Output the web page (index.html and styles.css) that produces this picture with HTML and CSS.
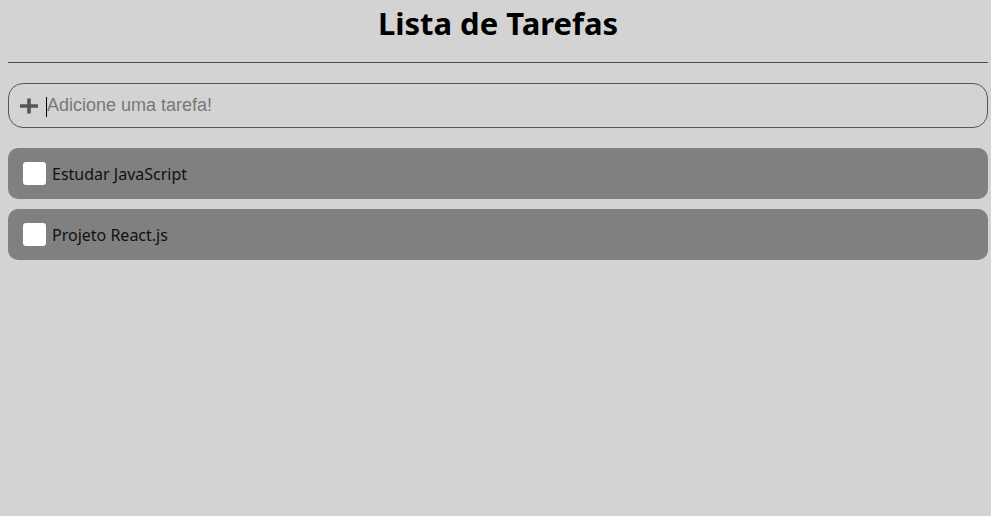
FILE: index.html
```html
<!DOCTYPE html>
<html lang="pt-BR">
<head>
<meta charset="utf-8">
<title>Lista de Tarefas</title>
<link rel="stylesheet" href="styles.css">
</head>
<body>
<header class="header">
  <h1 class="title">Lista de Tarefas</h1>
</header>
<hr class="divider">
<form class="add-form">
  <svg class="plus-icon" width="18" height="18" viewBox="0 0 18 18" aria-hidden="true">
    <path d="M9 1.5v15M0 9h18" stroke="#555" stroke-width="3.6" stroke-linecap="butt" fill="none"/>
  </svg>
  <span class="caret"></span>
  <input class="add-input" type="text" placeholder="Adicione uma tarefa!">
</form>
<ul class="task-list">
  <li class="task">
    <span class="check"></span>
    <span class="task-text">Estudar JavaScript</span>
  </li>
  <li class="task">
    <span class="check"></span>
    <span class="task-text">Projeto React.js</span>
  </li>
</ul>
</body>
</html>
```
FILE: styles.css
```css
* { box-sizing: border-box; }
html, body { height: 100%; }
body {
  margin: 0;
  padding: 0 3px 0 8px;
  background: #d3d3d3;
  font-family: "Noto Sans", sans-serif;
}
.header { text-align: center; }
.title {
  margin: 0;
  font-size: 31px;
  line-height: 46px;
  font-weight: 700;
  color: #000;
}
.divider {
  margin: 16px 0 0;
  border: 0;
  border-top: 1px solid #4a4a4a;
  height: 0;
}
.add-form {
  margin-top: 20px;
  height: 45px;
  border: 1px solid #555;
  border-radius: 15px;
  display: flex;
  align-items: center;
  padding-left: 11px;
}
.plus-icon { flex: none; margin-right: 8px; margin-top: 1px; }
.caret {
  flex: none;
  width: 1px;
  height: 20px;
  margin-top: 2px;
  background: #000;
}
.add-input {
  flex: 1;
  border: 0;
  outline: none;
  background: transparent;
  font-family: "Liberation Sans", Arial, sans-serif;
  font-size: 18px;
  color: #000;
  padding: 0;
  height: 24px;
}
.add-input::placeholder { color: #777; }
.task-list {
  list-style: none;
  margin: 20px 0 0;
  padding: 0;
  display: flex;
  flex-direction: column;
  gap: 10px;
}
.task {
  height: 51px;
  background: #808080;
  border-radius: 10px;
  display: flex;
  align-items: center;
  padding-left: 15px;
  gap: 6px;
}
.check {
  width: 23px;
  height: 23px;
  background: #fff;
  border-radius: 3px;
  flex: none;
}
.task-text {
  font-size: 16px;
  color: #111;
}
```
